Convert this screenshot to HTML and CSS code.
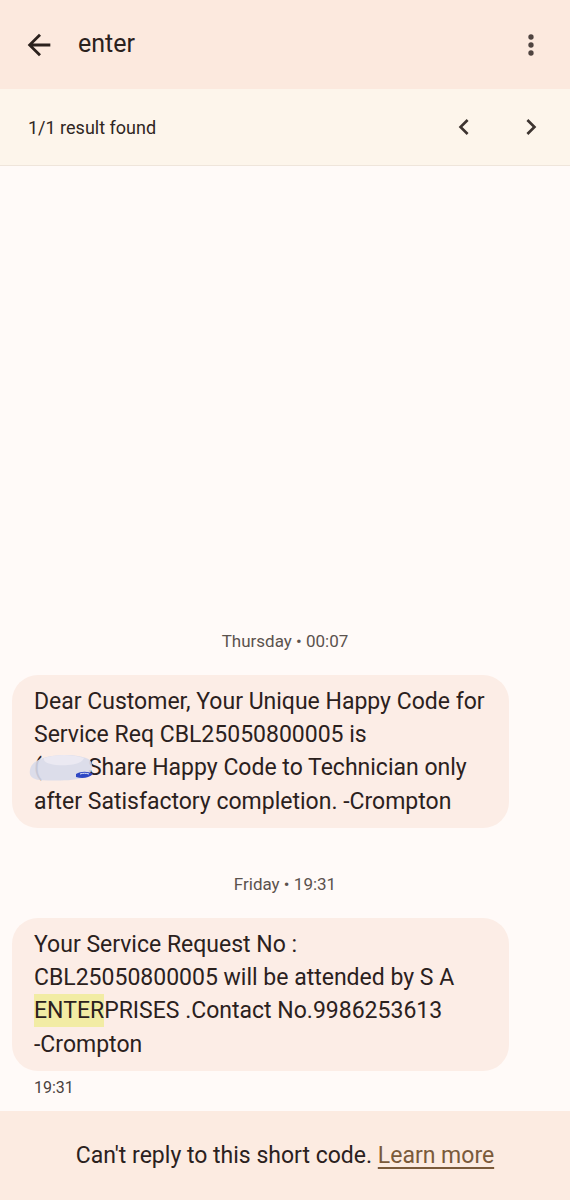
FILE: index.html
```html
<!DOCTYPE html>
<html lang="en">
<head>
    <meta charset="UTF-8">
    <meta name="viewport" content="width=device-width, initial-scale=1.0">
    <title>Messages - search</title>
    <link rel="stylesheet" href="styles.css">
</head>
<body>
    <div class="screen">
        <header class="appbar">
            <button class="icon-btn back" aria-label="Back">
                <svg viewBox="0 0 24 24" width="34" height="34"><path d="M20 11H7.83l5.59-5.59L12 4l-8 8 8 8 1.41-1.41L7.83 13H20v-2z"/></svg>
            </button>
            <div class="query">enter</div>
            <button class="icon-btn more" aria-label="More options">
                <svg viewBox="0 0 24 24" width="32" height="32"><circle cx="12" cy="6" r="2"/><circle cx="12" cy="12" r="2"/><circle cx="12" cy="18" r="2"/></svg>
            </button>
        </header>

        <div class="results-bar">
            <span class="results-count">1/1 result found</span>
            <div class="results-nav">
                <button class="icon-btn" aria-label="Previous">
                    <svg viewBox="0 0 24 24" width="32" height="32"><path d="M15.41 7.41L14 6l-6 6 6 6 1.41-1.41L10.83 12z"/></svg>
                </button>
                <button class="icon-btn" aria-label="Next">
                    <svg viewBox="0 0 24 24" width="32" height="32"><path d="M8.59 16.59L10 18l6-6-6-6-1.41 1.41L13.17 12z"/></svg>
                </button>
            </div>
        </div>

        <main class="thread">
            <div class="stamp">Thursday &bull; 00:07</div>
            <div class="bubble">
                Dear Customer, Your Unique Happy Code for<br>
                Service Req CBL25050800005 is<br>
                (<span class="redact"><svg viewBox="0 0 68 30" width="68" height="30"><path d="M4 19 C5 11 14 7 26 5 C40 3 56 4 64 9 C68 15 66 22 60 26 C48 30 30 30 14 29 C5 28 3 24 4 19z" fill="#d8daea" fill-opacity="0.9"/><path d="M18 7 C30 3 46 3 58 7 C56 13 44 15 30 14 C22 13 17 11 18 7z" fill="#ebe9f2"/><path d="M50 23 C55 20 62 20 67 23 C63 27 56 28 50 26z" fill="#2f48c4"/><path d="M54 23 C57 22 60 22 63 23" stroke="#dfe3f7" stroke-width="1" fill="none"/></svg></span>Share Happy Code to Technician only<br>
                after Satisfactory completion. -Crompton
            </div>

            <div class="stamp">Friday &bull; 19:31</div>
            <div class="bubble">
                Your Service Request No :<br>
                CBL25050800005 will be attended by S A<br>
                <span class="hit">ENTER</span>PRISES .Contact No.9986253613<br>
                -Crompton
            </div>
            <div class="sent-time">19:31</div>
        </main>

        <footer class="notice">
            Can't reply to this short code.&nbsp;<a href="#" class="learn">Learn more</a>
        </footer>
    </div>
</body>
</html>
```

FILE: styles.css
```css
body {
    margin: 0;
    font-family: Roboto, "Noto Sans", sans-serif;
    background-color: #fffaf8;
    color: #2b211d;
}

.screen {
    display: flex;
    flex-direction: column;
    height: 100vh;
}

.icon-btn {
    display: flex;
    align-items: center;
    justify-content: center;
    padding: 0;
    border: none;
    background: none;
    fill: #2b211d;
    cursor: pointer;
}

.appbar {
    display: flex;
    align-items: center;
    height: 89px;
    padding: 0 23px 0 22px;
    background: #fce9de;
}

.query {
    flex: 1;
    margin-left: 22px;
    font-size: 25px;
    margin-top: -2px;
}

.more {
    fill: #4f4440;
}

.results-bar {
    display: flex;
    align-items: center;
    justify-content: space-between;
    height: 76px;
    padding: 0 23px 0 28px;
    background: #fdf5eb;
    border-bottom: 1px solid #efe5db;
}

.results-count {
    font-size: 18px;
    color: #2f2622;
}

.results-nav {
    display: flex;
    gap: 35px;
}

.results-nav .icon-btn {
    fill: #3d3430;
}

.thread {
    flex: 1;
    display: flex;
    flex-direction: column;
    justify-content: flex-end;
    padding: 0 12px 13px;
}

.stamp {
    text-align: center;
    font-size: 17px;
    line-height: 20px;
    color: #5b524e;
    margin: 46px 0 24px;
}

.bubble {
    box-sizing: border-box;
    width: 497px;
    padding: 10px 10px 10px 22px;
    border-radius: 26px;
    background: #fcede6;
    font-size: 23px;
    line-height: 33.3px;
    white-space: nowrap;
}

.redact {
    position: relative;
    display: inline-block;
    width: 46px;
    height: 20px;
}

.redact svg {
    position: absolute;
    left: -16px;
    top: -4px;
}

.hit {
    background: #f2eca4;
    padding: 3px 0;
}

.sent-time {
    margin: 7px 0 0 22px;
    font-size: 16px;
    line-height: 20px;
    color: #4a413d;
}

.notice {
    display: flex;
    justify-content: center;
    align-items: center;
    height: 89px;
    background: #fcebe1;
    font-size: 23px;
    color: #2b211d;
}

.learn {
    color: #7a5a3a;
    text-decoration: underline;
    text-decoration-thickness: 2px;
    text-underline-offset: 4px;
}
```
